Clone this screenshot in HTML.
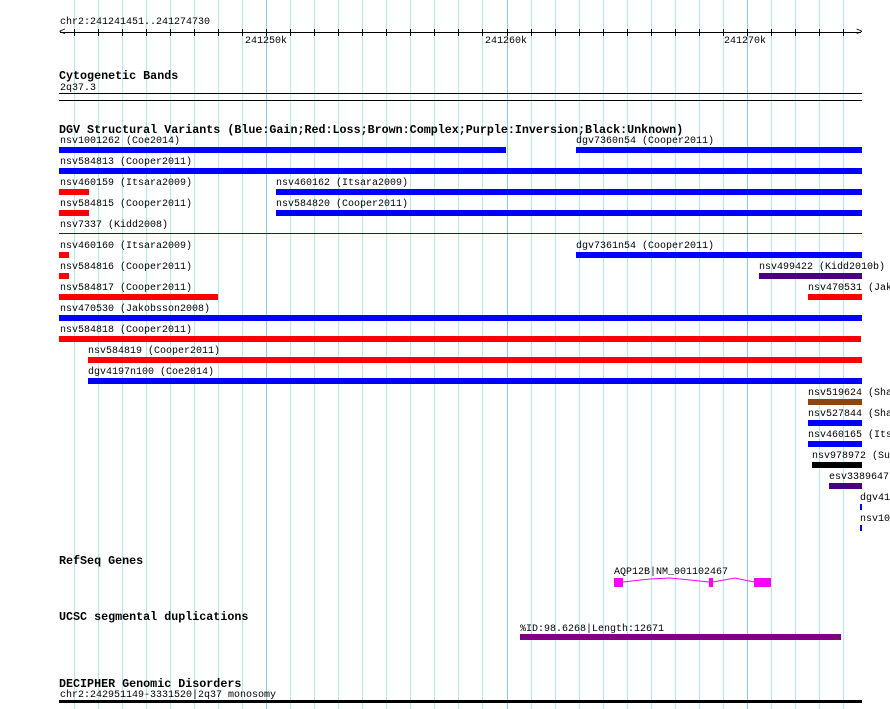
<!DOCTYPE html>
<html><head><meta charset="utf-8"><style>
body{margin:0;width:890px;height:709px;background:#fff;position:relative;overflow:hidden;font-family:"Liberation Mono",monospace;}
.t{position:absolute;font-size:10px;line-height:12px;white-space:pre;color:#000;margin-top:2px;}
.b{position:absolute;font-size:11.7px;line-height:12px;font-weight:bold;white-space:pre;color:#000;margin-top:2px;}
.r{position:absolute;height:6px;}
.g{position:absolute;top:0;width:1px;height:709px;background:#aaeef0;}
.gm{background:#88ccee;}
.tk{position:absolute;top:29px;width:1px;height:7px;background:#000;}
</style></head><body>
<div id="grid"></div>
<script>
var h='';
for(var k=-8;k<=24;k++){var x=Math.round(266+24.05*k);if(x<70||x>845)continue;var m=(k%10===0);h+='<div class="g'+(m?' gm':'')+'" style="left:'+x+'px"></div><div class="tk" style="left:'+x+'px"></div>';}
document.getElementById('grid').innerHTML=h;
</script>
<div class="t" style="left:60px;top:15px">chr2:241241451..241274730</div>
<div style="position:absolute;left:60px;top:32px;width:801px;height:1px;background:#000"></div>
<div class="t" style="left:59px;top:25px;font-size:11px">&lt;</div>
<div class="t" style="left:856px;top:25px;font-size:11px">&gt;</div>
<div class="t" style="left:245px;top:34px">241250k</div>
<div class="t" style="left:485px;top:34px">241260k</div>
<div class="t" style="left:724px;top:34px">241270k</div>

<div class="b" style="left:59px;top:68px">Cytogenetic Bands</div>
<div class="t" style="left:60px;top:81px">2q37.3</div>
<div style="position:absolute;left:59px;top:93px;width:803px;height:1px;background:#000"></div>
<div style="position:absolute;left:59px;top:100px;width:803px;height:1px;background:#000"></div>

<div class="b" style="left:59px;top:122px">DGV Structural Variants (Blue:Gain;Red:Loss;Brown:Complex;Purple:Inversion;Black:Unknown)</div>

<div class="t" style="left:60px;top:134px">nsv1001262 (Coe2014)</div>
<div class="t" style="left:576px;top:134px">dgv7360n54 (Cooper2011)</div>
<div class="r" style="left:59px;top:147px;width:447px;background:#00f"></div>
<div class="r" style="left:576px;top:147px;width:286px;background:#00f"></div>

<div class="t" style="left:60px;top:155px">nsv584813 (Cooper2011)</div>
<div class="r" style="left:59px;top:168px;width:803px;background:#00f"></div>

<div class="t" style="left:60px;top:176px">nsv460159 (Itsara2009)</div>
<div class="t" style="left:276px;top:176px">nsv460162 (Itsara2009)</div>
<div class="r" style="left:59px;top:189px;width:30px;background:#f00"></div>
<div class="r" style="left:276px;top:189px;width:586px;background:#00f"></div>

<div class="t" style="left:60px;top:197px">nsv584815 (Cooper2011)</div>
<div class="t" style="left:276px;top:197px">nsv584820 (Cooper2011)</div>
<div class="r" style="left:59px;top:210px;width:30px;background:#f00"></div>
<div class="r" style="left:276px;top:210px;width:586px;background:#00f"></div>

<div class="t" style="left:60px;top:218px">nsv7337 (Kidd2008)</div>
<div style="position:absolute;left:59px;top:233px;width:803px;height:1px;background:#3a1060"></div>

<div class="t" style="left:60px;top:239px">nsv460160 (Itsara2009)</div>
<div class="t" style="left:576px;top:239px">dgv7361n54 (Cooper2011)</div>
<div class="r" style="left:59px;top:252px;width:10px;background:#f00"></div>
<div class="r" style="left:576px;top:252px;width:286px;background:#00f"></div>

<div class="t" style="left:60px;top:260px">nsv584816 (Cooper2011)</div>
<div class="t" style="left:759px;top:260px">nsv499422 (Kidd2010b)</div>
<div class="r" style="left:59px;top:273px;width:10px;background:#f00"></div>
<div class="r" style="left:759px;top:273px;width:103px;background:#4b0082"></div>

<div class="t" style="left:60px;top:281px">nsv584817 (Cooper2011)</div>
<div class="t" style="left:808px;top:281px">nsv470531 (Jak</div>
<div class="r" style="left:59px;top:294px;width:159px;background:#f00"></div>
<div class="r" style="left:808px;top:294px;width:54px;background:#f00"></div>

<div class="t" style="left:60px;top:302px">nsv470530 (Jakobsson2008)</div>
<div class="r" style="left:59px;top:315px;width:803px;background:#00f"></div>

<div class="t" style="left:60px;top:323px">nsv584818 (Cooper2011)</div>
<div class="r" style="left:59px;top:336px;width:802px;background:#f00"></div>

<div class="t" style="left:88px;top:344px">nsv584819 (Cooper2011)</div>
<div class="r" style="left:88px;top:357px;width:774px;background:#f00"></div>

<div class="t" style="left:88px;top:365px">dgv4197n100 (Coe2014)</div>
<div class="r" style="left:88px;top:378px;width:774px;background:#00f"></div>

<div class="t" style="left:808px;top:386px">nsv519624 (Sha</div>
<div class="r" style="left:808px;top:399px;width:54px;background:#8b4513"></div>
<div class="t" style="left:808px;top:407px">nsv527844 (Sha</div>
<div class="r" style="left:808px;top:420px;width:54px;background:#00f"></div>
<div class="t" style="left:808px;top:428px">nsv460165 (Its</div>
<div class="r" style="left:808px;top:441px;width:54px;background:#00f"></div>
<div class="t" style="left:812px;top:449px">nsv978972 (Su</div>
<div class="r" style="left:812px;top:462px;width:50px;background:#000"></div>
<div class="t" style="left:829px;top:470px">esv3389647</div>
<div class="r" style="left:829px;top:483px;width:33px;background:#4b0082"></div>
<div class="t" style="left:860px;top:491px">dgv41</div>
<div class="r" style="left:860px;top:504px;width:2px;background:#00f"></div>
<div class="t" style="left:860px;top:512px">nsv10</div>
<div class="r" style="left:860px;top:525px;width:2px;background:#00f"></div>

<div class="b" style="left:59px;top:553px">RefSeq Genes</div>
<div class="t" style="left:614px;top:565px">AQP12B|NM_001102467</div>
<svg style="position:absolute;left:0;top:0" width="890" height="709">
<polyline points="623,582 650,579 670,578 690,580 709,582" fill="none" stroke="#f0f" stroke-width="1"/>
<polyline points="713,582 735,578 754,582" fill="none" stroke="#f0f" stroke-width="1"/>
<rect x="614" y="578" width="9" height="9" fill="#f0f"/>
<rect x="709" y="578" width="4" height="9" fill="#f0f"/>
<rect x="754" y="578" width="17" height="9" fill="#f0f"/>
</svg>

<div class="b" style="left:59px;top:609px">UCSC segmental duplications</div>
<div class="t" style="left:520px;top:622px">%ID:98.6268|Length:12671</div>
<div class="r" style="left:520px;top:634px;width:321px;background:#800080"></div>

<div class="b" style="left:59px;top:676px">DECIPHER Genomic Disorders</div>
<div class="t" style="left:60px;top:688px">chr2:242951149-3331520|2q37 monosomy</div>
<div style="position:absolute;left:59px;top:700px;width:803px;height:3px;background:#000"></div>
</body></html>
